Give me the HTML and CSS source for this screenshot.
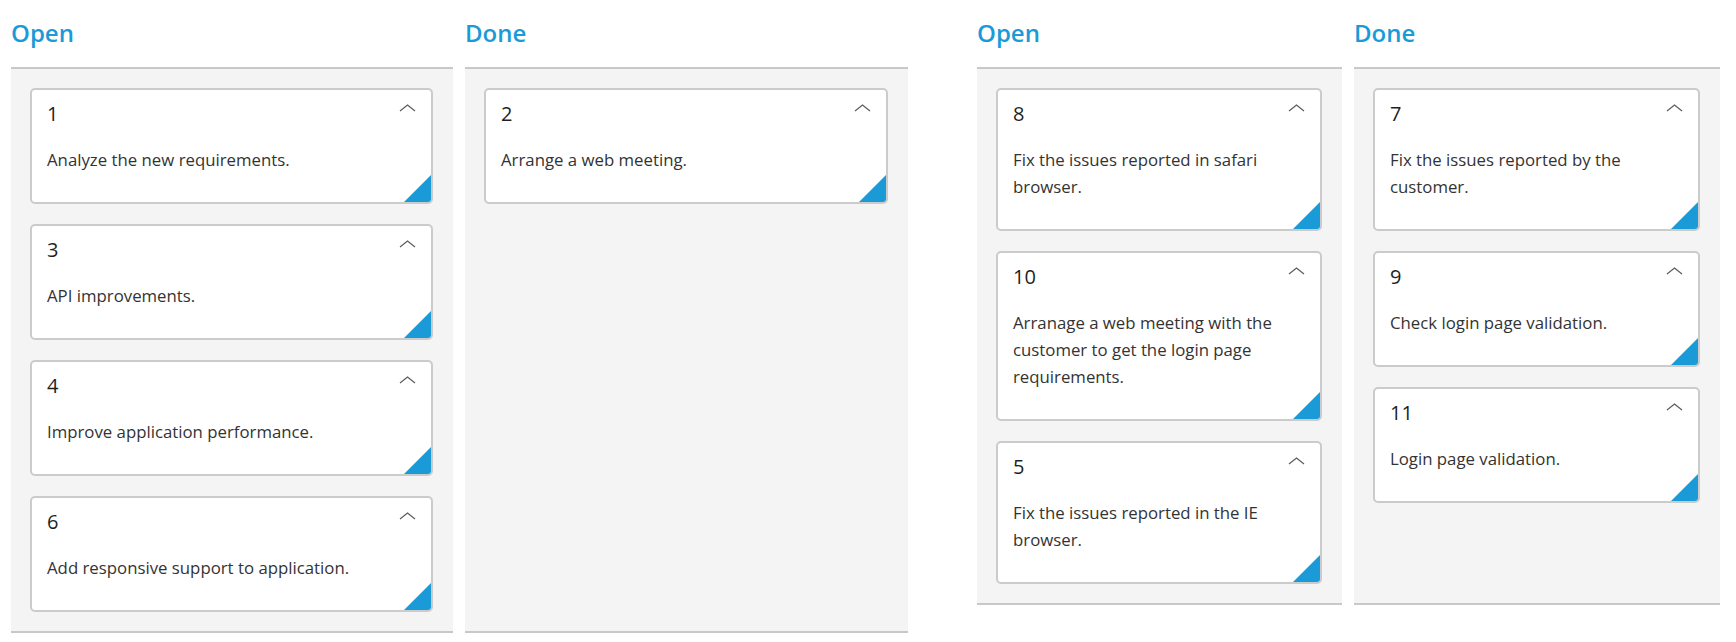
FILE: index.html
```html
<!DOCTYPE html>
<html lang="en">
<head>
<meta charset="utf-8">
<title>Kanban</title>
<link rel="stylesheet" href="styles.css">
</head>
<body>
<div class="page">
  <div class="board board-wide">
    <section class="column">
      <h2 class="column-header">Open</h2>
      <div class="column-body">
        <div class="card"><div class="card-head"><span class="card-title">1</span><svg class="chev" width="17" height="8" viewBox="0 0 17 8"><polyline points="1,7 8.5,1 16,7"/></svg></div><p class="card-text">Analyze the new requirements.</p></div>
        <div class="card"><div class="card-head"><span class="card-title">3</span><svg class="chev" width="17" height="8" viewBox="0 0 17 8"><polyline points="1,7 8.5,1 16,7"/></svg></div><p class="card-text">API improvements.</p></div>
        <div class="card"><div class="card-head"><span class="card-title">4</span><svg class="chev" width="17" height="8" viewBox="0 0 17 8"><polyline points="1,7 8.5,1 16,7"/></svg></div><p class="card-text">Improve application performance.</p></div>
        <div class="card"><div class="card-head"><span class="card-title">6</span><svg class="chev" width="17" height="8" viewBox="0 0 17 8"><polyline points="1,7 8.5,1 16,7"/></svg></div><p class="card-text">Add responsive support to application.</p></div>
      </div>
    </section>
    <section class="column">
      <h2 class="column-header">Done</h2>
      <div class="column-body">
        <div class="card"><div class="card-head"><span class="card-title">2</span><svg class="chev" width="17" height="8" viewBox="0 0 17 8"><polyline points="1,7 8.5,1 16,7"/></svg></div><p class="card-text">Arrange a web meeting.</p></div>
      </div>
    </section>
  </div>
  <div class="board board-narrow">
    <section class="column">
      <h2 class="column-header">Open</h2>
      <div class="column-body">
        <div class="card"><div class="card-head"><span class="card-title">8</span><svg class="chev" width="17" height="8" viewBox="0 0 17 8"><polyline points="1,7 8.5,1 16,7"/></svg></div><p class="card-text">Fix the issues reported in safari browser.</p></div>
        <div class="card"><div class="card-head"><span class="card-title">10</span><svg class="chev" width="17" height="8" viewBox="0 0 17 8"><polyline points="1,7 8.5,1 16,7"/></svg></div><p class="card-text">Arranage a web meeting with the customer to get the login page requirements.</p></div>
        <div class="card"><div class="card-head"><span class="card-title">5</span><svg class="chev" width="17" height="8" viewBox="0 0 17 8"><polyline points="1,7 8.5,1 16,7"/></svg></div><p class="card-text">Fix the issues reported in the IE browser.</p></div>
      </div>
    </section>
    <section class="column">
      <h2 class="column-header">Done</h2>
      <div class="column-body">
        <div class="card"><div class="card-head"><span class="card-title">7</span><svg class="chev" width="17" height="8" viewBox="0 0 17 8"><polyline points="1,7 8.5,1 16,7"/></svg></div><p class="card-text">Fix the issues reported by the customer.</p></div>
        <div class="card"><div class="card-head"><span class="card-title">9</span><svg class="chev" width="17" height="8" viewBox="0 0 17 8"><polyline points="1,7 8.5,1 16,7"/></svg></div><p class="card-text">Check login page validation.</p></div>
        <div class="card"><div class="card-head"><span class="card-title">11</span><svg class="chev" width="17" height="8" viewBox="0 0 17 8"><polyline points="1,7 8.5,1 16,7"/></svg></div><p class="card-text">Login page validation.</p></div>
      </div>
    </section>
  </div>
</div>
</body>
</html>
```
FILE: styles.css
```css
* { box-sizing: border-box; }

html, body {
  margin: 0;
  padding: 0;
  background: #ffffff;
  font-family: "Open Sans", "Noto Sans", sans-serif;
}

.page {
  display: flex;
  align-items: flex-start;
  padding-left: 11px;
  gap: 69px;
}

.board {
  display: grid;
  column-gap: 12px;
  align-items: stretch;
}

.board-wide {
  width: 897px;
  grid-template-columns: 442px 443px;
}

.board-narrow {
  width: 743px;
  grid-template-columns: 365px 366px;
}

.column {
  display: flex;
  flex-direction: column;
}

.column-header {
  margin: 0;
  padding: 18px 0 19px 0;
  font-size: 24px;
  line-height: 30px;
  font-weight: 600;
  color: #1a9bd7;
}

.column-body {
  flex: 1;
  display: flex;
  flex-direction: column;
  gap: 20px;
  background: #f4f4f4;
  border-top: 2px solid #c8c8c8;
  border-bottom: 2px solid #c8c8c8;
  padding: 19px 20px 19px 19px;
}

.card {
  position: relative;
  overflow: hidden;
  background: #ffffff;
  border: 2px solid #cbcbcb;
  border-radius: 5px;
  padding: 10px 15px 29px 15px;
}

.card::after {
  content: "";
  position: absolute;
  right: 0;
  bottom: 0;
  width: 27px;
  height: 27px;
  background: #1a9bd7;
  clip-path: polygon(100% 0, 100% 100%, 0 100%);
}

.card-head {
  display: flex;
  justify-content: space-between;
  align-items: flex-start;
}

.card-title {
  font-size: 20px;
  line-height: 27px;
  color: #1f1f1f;
}

.chev {
  margin-top: 4px;
  fill: none;
  stroke: #5f5f5f;
  stroke-width: 1.3;
}

.card-text {
  margin: 19px 0 0 0;
  font-size: 16.8px;
  line-height: 27px;
  color: #333333;
}
```
